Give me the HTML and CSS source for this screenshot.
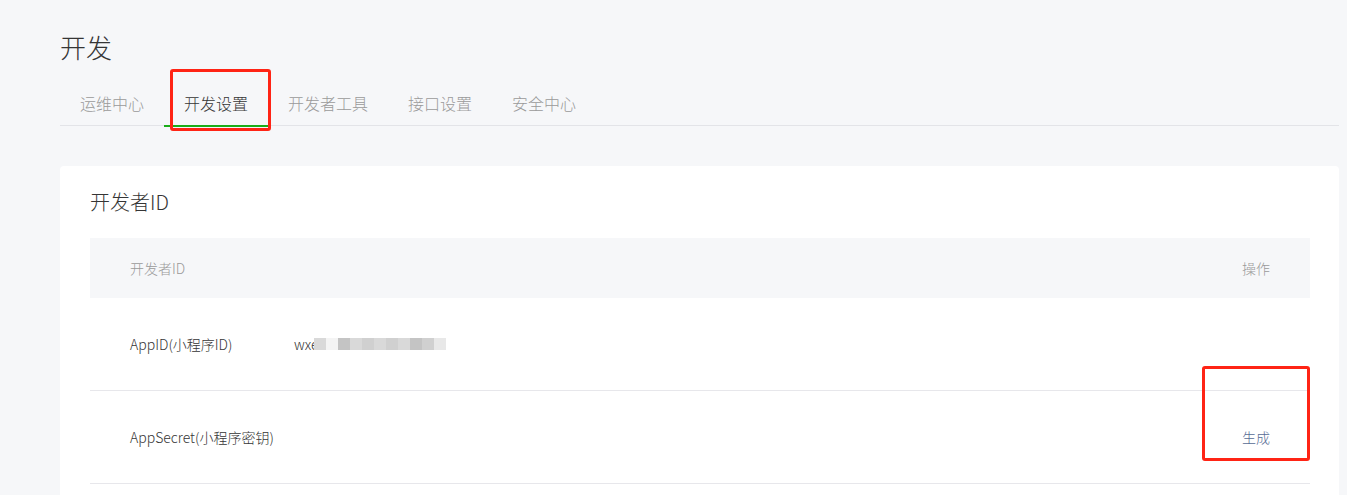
FILE: index.html
```html
<!DOCTYPE html>
<html lang="zh-CN">
<head>
<meta charset="utf-8">
<title>开发</title>
<link rel="stylesheet" href="styles.css">
</head>
<body>
<div class="page">
  <h1 class="page-title">开发</h1>
  <ul class="tabs">
    <li class="tab">运维中心</li>
    <li class="tab active">开发设置<span class="mark mark-tab"></span></li>
    <li class="tab">开发者工具</li>
    <li class="tab">接口设置</li>
    <li class="tab">安全中心</li>
  </ul>
  <div class="card">
    <h2 class="card-title">开发者ID</h2>
    <div class="table">
      <div class="row head">
        <div class="cell name">开发者ID</div>
        <div class="cell op">操作</div>
      </div>
      <div class="row">
        <div class="cell name"><span class="label">AppID(小程序ID)</span><span class="value">wxe<span class="blur"><i class="p1"></i><i class="p0"></i><i class="p2"></i><i class="p1"></i><i class="p3"></i><i class="p1"></i><i class="p3"></i><i class="p1"></i><i class="p2"></i><i class="p3"></i><i class="p4"></i></span></span></div>
        <div class="cell op"></div>
      </div>
      <div class="row">
        <div class="cell name"><span class="label">AppSecret(小程序密钥)</span></div>
        <div class="cell op"><a class="link">生成</a><span class="mark mark-op"></span></div>
      </div>
    </div>
  </div>
</div>
</body>
</html>
```
FILE: styles.css
```css
* { box-sizing: border-box; }
html, body { margin: 0; padding: 0; }
body {
  background: #f6f7f9;
  font-family: "Noto Sans CJK SC", "Noto Sans", sans-serif;
  font-weight: 300;
  color: #353535;
  height: 495px;
  overflow: hidden;
}
.page {
  padding: 29px 8px 0 60px;
}
.page-title {
  margin: 0;
  font-size: 26px;
  font-weight: 300;
  line-height: 36px;
  color: #353535;
}
.tabs {
  list-style: none;
  margin: 18px 0 0;
  padding: 0;
  display: flex;
  border-bottom: 1px solid #e3e4e8;
  height: 43px;
}
.tab {
  position: relative;
  padding: 0 20px;
  font-size: 16px;
  line-height: 40px;
  height: 44px;
  color: #9a9a9a;
  border-bottom: 2px solid transparent;
}
.tab.active {
  color: #353535;
  border-bottom-color: #1aad19;
}
.mark {
  position: absolute;
  border: 3px solid #ff2415;
  border-radius: 3px;
}
.mark-tab {
  left: 6px;
  top: -14px;
  width: 101px;
  height: 62px;
}
.card {
  margin-top: 40px;
  background: #fff;
  border-radius: 4px;
  padding: 22px 29px 0 30px;
  height: 340px;
}
.card-title {
  margin: 0 0 22px;
  font-size: 20px;
  font-weight: 300;
  line-height: 28px;
  color: #353535;
}
.row {
  display: flex;
  justify-content: space-between;
  align-items: center;
  height: 93px;
  border-bottom: 1px solid #e7e7eb;
  font-size: 14px;
}
.row.head {
  height: 60px;
  background: #f6f7f9;
  border-bottom: none;
  color: #9a9a9a;
}
.cell.name {
  padding-left: 40px;
  display: flex;
  align-items: center;
}
.cell.op {
  position: relative;
  padding-right: 40px;
  align-self: stretch;
  display: flex;
  align-items: center;
}
.label {
  width: 164px;
}
.value {
  display: flex;
  align-items: center;
}
.blur {
  display: flex;
  height: 12px;
  margin-left: -5px;
}
.blur i {
  display: block;
  width: 12px;
  height: 12px;
}
.blur .p0 { background: #f4f4f4; }
.blur .p1 { background: #d9d9d9; }
.blur .p2 { background: #c4c4c4; }
.blur .p3 { background: #d0d0d0; }
.blur .p4 { background: #e8e8e8; }
.link {
  color: #576b95;
  cursor: pointer;
}
.mark-op {
  right: 0;
  top: -25px;
  width: 108px;
  height: 95px;
}
```
